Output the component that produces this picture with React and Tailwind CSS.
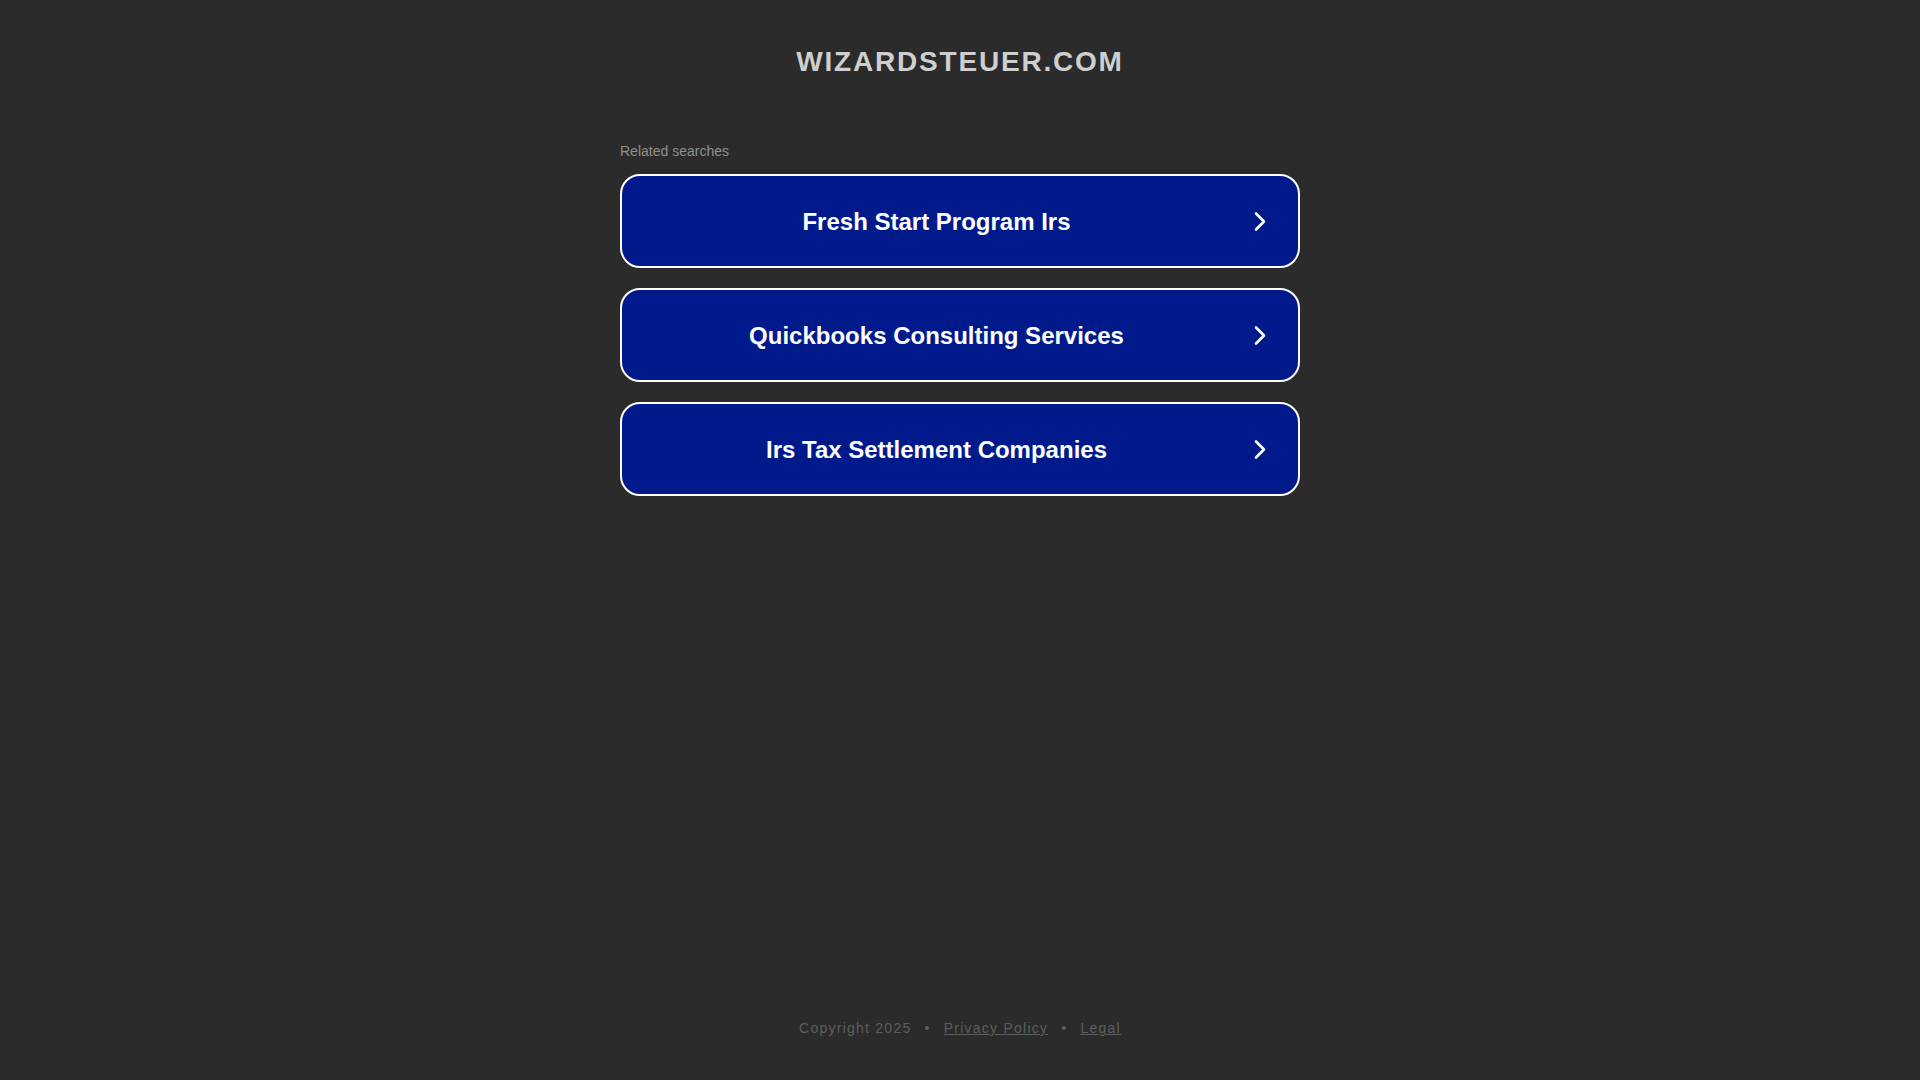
import React from "react";

const items = [
  "Fresh Start Program Irs",
  "Quickbooks Consulting Services",
  "Irs Tax Settlement Companies",
];

function Chevron() {
  return (
    <svg width="14" height="21" viewBox="0 0 14 21" fill="none" className="shrink-0">
      <polyline points="3,2.5 11,10.5 3,18.5" stroke="#ffffff" strokeWidth="2.6" strokeLinecap="round" strokeLinejoin="round" />
    </svg>
  );
}

export default function App() {
  return (
    <div
      className="flex h-screen w-full flex-col items-center bg-[#2b2b2b]"
      style={{ fontFamily: '"Liberation Sans", Arial, sans-serif' }}
    >
      <h1 className="mt-[46px] text-[28px] font-bold leading-[32px] tracking-[1.8px] text-[#cfcfcf]">
        WIZARDSTEUER.COM
      </h1>
      <div className="mt-[65px] flex w-[680px] flex-col">
        <div className="text-[14px] leading-[16px] text-[#909090]">Related searches</div>
        <div className="mt-[15px] flex flex-col gap-[20px]">
          {items.map((t) => (
            <a
              key={t}
              href="#"
              className="flex h-[94px] items-center rounded-[20px] border-2 border-white bg-[#011a8b] pl-[31px] pr-[31px]"
            >
              <span className="flex-1 pr-[33px] pt-[2px] text-center text-[24px] font-bold leading-[28px] text-white">
                {t}
              </span>
              <Chevron />
            </a>
          ))}
        </div>
      </div>
      <div className="mt-auto mb-[44px] flex items-center text-[14px] leading-[16px] tracking-[1.25px] text-[#5e5e5e]">
        <span>Copyright 2025</span>
        <span className="mx-[13px]">•</span>
        <a href="#" className="underline">Privacy Policy</a>
        <span className="mx-[13px]">•</span>
        <a href="#" className="underline">Legal</a>
      </div>
    </div>
  );
}
